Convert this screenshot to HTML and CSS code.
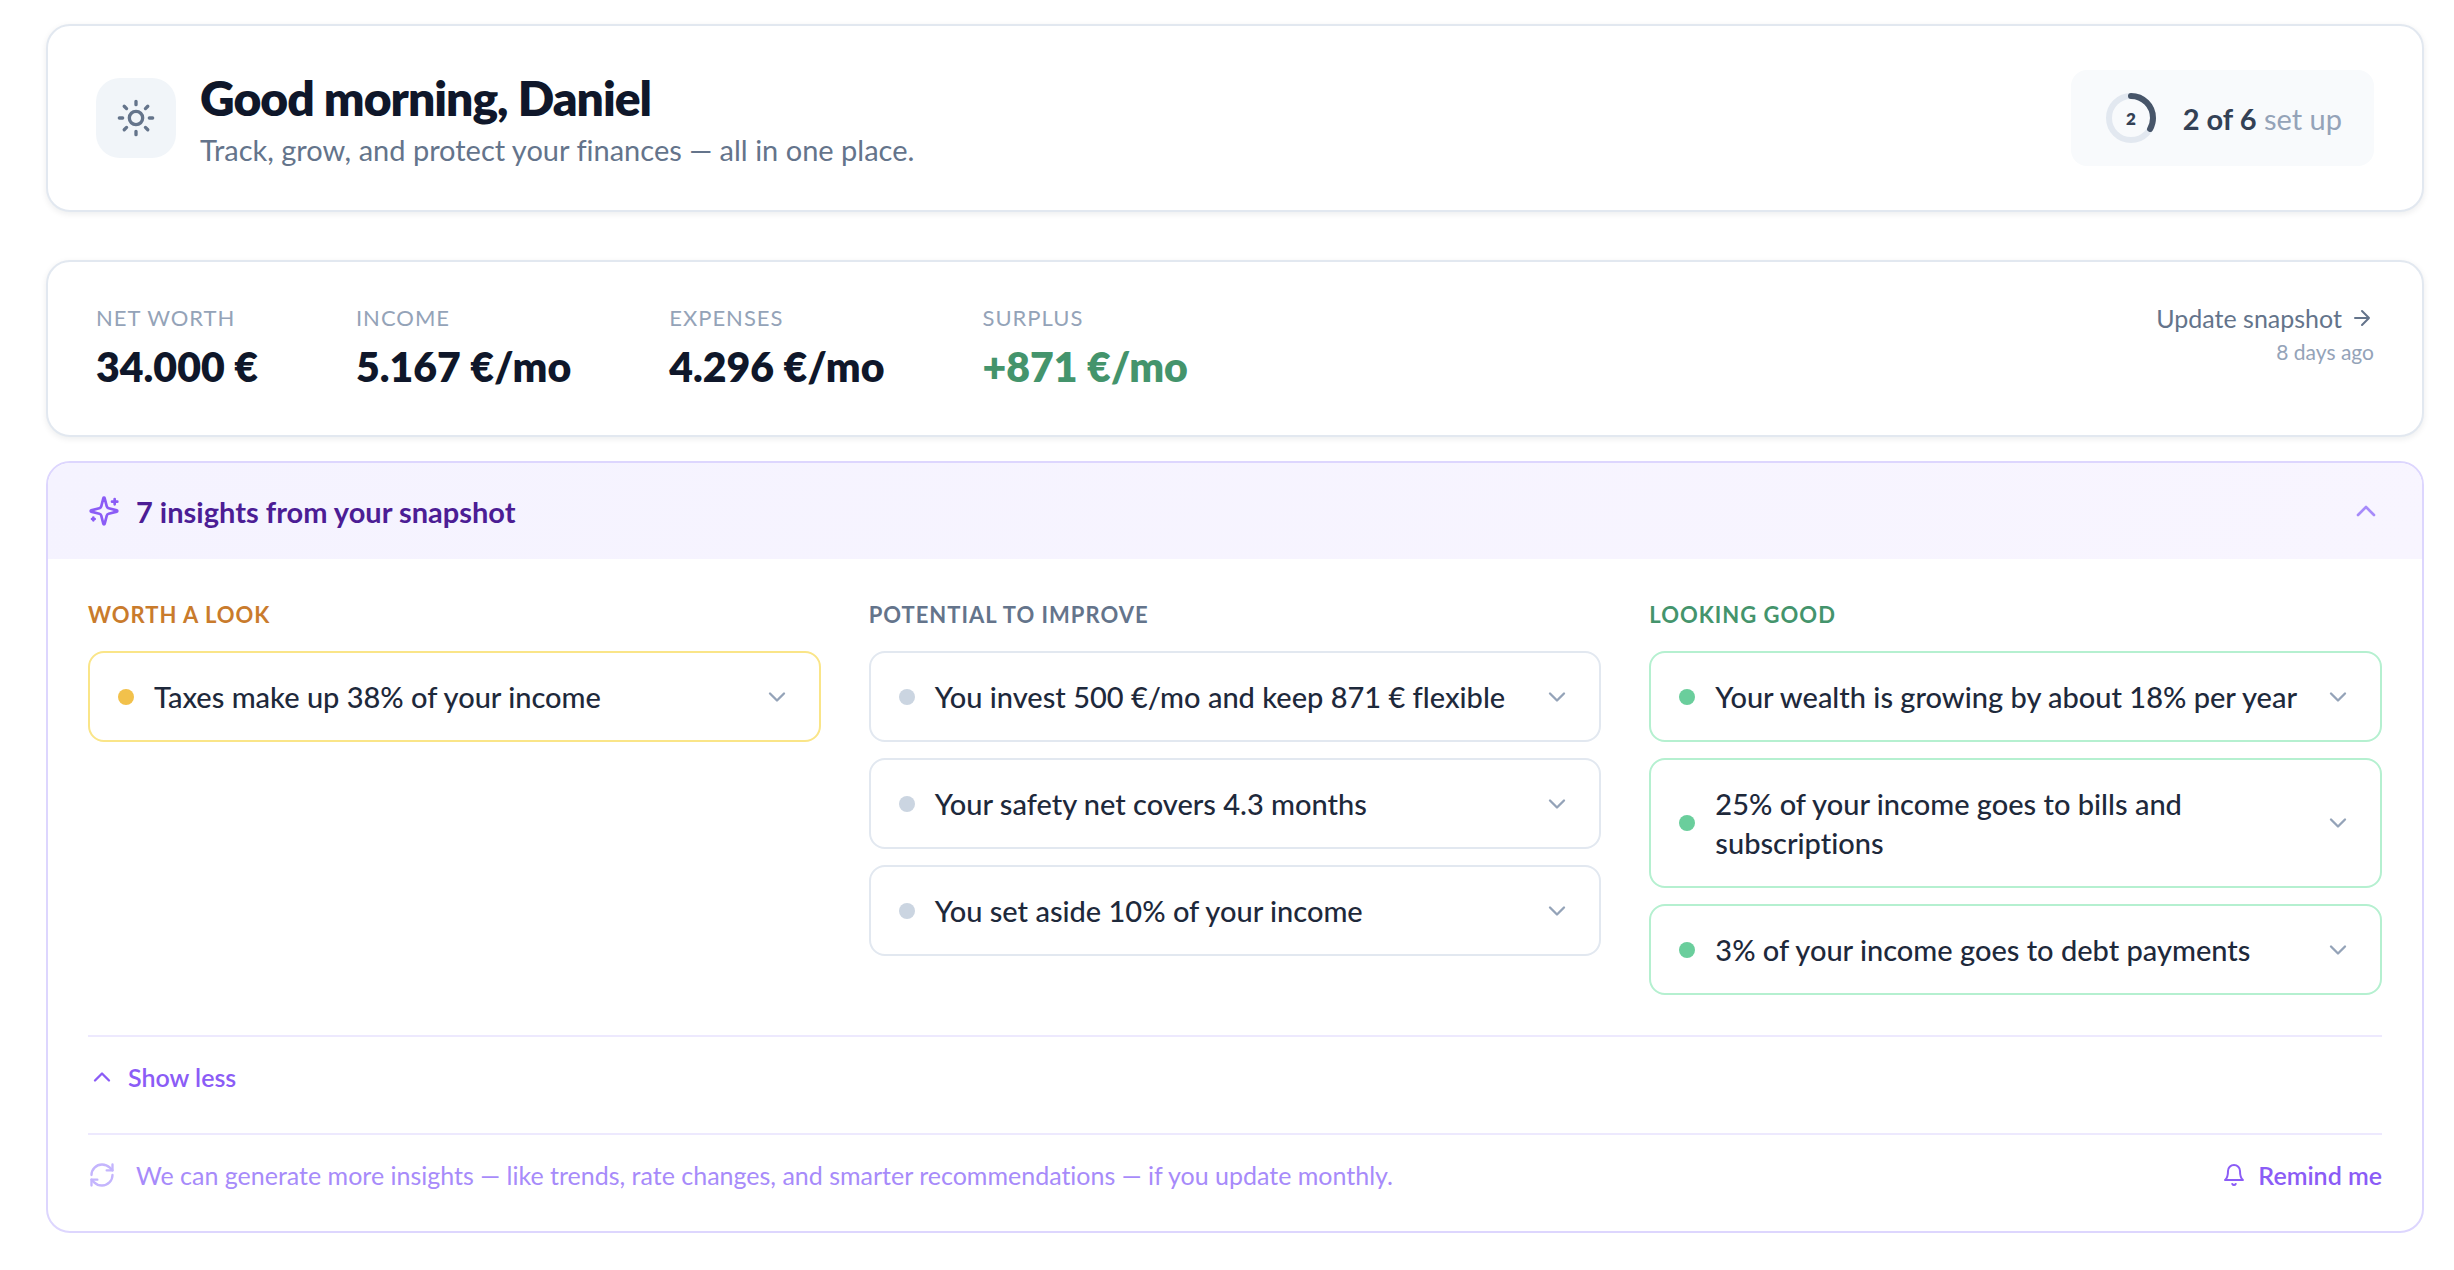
FILE: index.html
```html
<!DOCTYPE html>
<html lang="en">
<head>
  <meta charset="UTF-8">
  <meta name="viewport" content="width=device-width, initial-scale=1.0">
  <title>Financial overview</title>
  <link rel="stylesheet" href="styles.css">
</head>
<body>
  <!-- shared icons -->
  <svg class="sprite" aria-hidden="true">
    <symbol id="chevron-down" viewBox="0 0 24 24"><path d="m6 9 6 6 6-6"/></symbol>
    <symbol id="chevron-up" viewBox="0 0 24 24"><path d="m18 15-6-6-6 6"/></symbol>
  </svg>

  <main class="page">
    <header class="card greeting">
      <div class="greeting-icon">
        <svg class="icon icon-lg" viewBox="0 0 24 24"><circle cx="12" cy="12" r="4"/><path d="M12 2v2M12 20v2M4.93 4.93l1.41 1.41M17.66 17.66l1.41 1.41M2 12h2M20 12h2M6.34 17.66l-1.41 1.41M19.07 4.93l-1.41 1.41"/></svg>
      </div>
      <div class="greeting-text">
        <h1>Good morning, Daniel</h1>
        <p>Track, grow, and protect your finances — all in one place.</p>
      </div>
      <div class="setup">
        <svg class="ring" viewBox="0 0 56 56">
          <circle class="ring-track" cx="28" cy="28" r="22"/>
          <circle class="ring-value" cx="28" cy="28" r="22" pathLength="6" stroke-dasharray="2 4" transform="rotate(-90 28 28)"/>
          <text x="28" y="35" text-anchor="middle">2</text>
        </svg>
        <span><strong>2 of 6</strong> set up</span>
      </div>
    </header>

    <section class="card snapshot">
      <dl class="stats">
        <div><dt>Net worth</dt><dd>34.000 €</dd></div>
        <div><dt>Income</dt><dd>5.167 €/mo</dd></div>
        <div><dt>Expenses</dt><dd>4.296 €/mo</dd></div>
        <div><dt>Surplus</dt><dd class="positive">+871 €/mo</dd></div>
      </dl>
      <div class="update">
        <a href="#">Update snapshot <svg class="icon icon-sm" viewBox="0 0 24 24"><path d="M5 12h14M12 5l7 7-7 7"/></svg></a>
        <span>8 days ago</span>
      </div>
    </section>

    <section class="card insights">
      <button class="insights-head" type="button" aria-expanded="true">
        <svg class="icon icon-md sparkle" viewBox="0 0 24 24"><path d="M9.937 15.5A2 2 0 0 0 8.5 14.063l-6.135-1.582a.5.5 0 0 1 0-.962L8.5 9.936A2 2 0 0 0 9.937 8.5l1.582-6.135a.5.5 0 0 1 .963 0L14.063 8.5A2 2 0 0 0 15.5 9.937l6.135 1.581a.5.5 0 0 1 0 .964L15.5 14.063a2 2 0 0 0-1.437 1.437l-1.582 6.135a.5.5 0 0 1-.963 0z"/><path d="M20 3v4M22 5h-4M4 17v2M5 18H3"/></svg>
        <span>7 insights from your snapshot</span>
        <svg class="icon icon-md"><use href="#chevron-up"/></svg>
      </button>

      <div class="insights-body">
        <div class="columns">
          <div class="column warn">
            <h2>Worth a look</h2>
            <button class="insight" type="button"><i></i><span>Taxes make up 38% of your income</span><svg class="icon"><use href="#chevron-down"/></svg></button>
          </div>
          <div class="column neutral">
            <h2>Potential to improve</h2>
            <button class="insight" type="button"><i></i><span>You invest 500 €/mo and keep 871 € flexible</span><svg class="icon"><use href="#chevron-down"/></svg></button>
            <button class="insight" type="button"><i></i><span>Your safety net covers 4.3 months</span><svg class="icon"><use href="#chevron-down"/></svg></button>
            <button class="insight" type="button"><i></i><span>You set aside 10% of your income</span><svg class="icon"><use href="#chevron-down"/></svg></button>
          </div>
          <div class="column good">
            <h2>Looking good</h2>
            <button class="insight" type="button"><i></i><span>Your wealth is growing by about 18% per year</span><svg class="icon"><use href="#chevron-down"/></svg></button>
            <button class="insight" type="button"><i></i><span>25% of your income goes to bills and subscriptions</span><svg class="icon"><use href="#chevron-down"/></svg></button>
            <button class="insight" type="button"><i></i><span>3% of your income goes to debt payments</span><svg class="icon"><use href="#chevron-down"/></svg></button>
          </div>
        </div>

        <div class="less">
          <button class="link-button" type="button"><svg class="icon"><use href="#chevron-up"/></svg>Show less</button>
        </div>

        <div class="reminder">
          <svg class="icon" viewBox="0 0 24 24"><path d="M3 12a9 9 0 0 1 9-9 9.75 9.75 0 0 1 6.74 2.74L21 8"/><path d="M21 3v5h-5M21 12a9 9 0 0 1-9 9 9.75 9.75 0 0 1-6.74-2.74L3 16"/><path d="M8 16H3v5"/></svg>
          <p>We can generate more insights — like trends, rate changes, and smarter recommendations — if you update monthly.</p>
          <button class="link-button" type="button"><svg class="icon icon-sm" viewBox="0 0 24 24"><path d="M6 8a6 6 0 0 1 12 0c0 7 3 9 3 9H3s3-2 3-9"/><path d="M10.3 21a1.94 1.94 0 0 0 3.4 0"/></svg>Remind me</button>
        </div>
      </div>
    </section>
  </main>
</body>
</html>
```
FILE: styles.css
```css
* {
  box-sizing: border-box;
}
body {
  margin: 0;
  background: #fff;
  color: #0f172a;
  font-family: Lato, "Open Sans", sans-serif;
  font-size: 29px;
  font-variant-ligatures: none;
}
h1, h2, p, dl, dd {
  margin: 0;
}
button {
  border: none;
  background: none;
  padding: 0;
  font: inherit;
  color: inherit;
  text-align: left;
  cursor: pointer;
}
.sprite {
  display: none;
}
.page {
  padding: 24px 30px 36px 46px;
}
.card {
  background: #fff;
  border: 2px solid #e2e8f0;
  border-radius: 24px;
  box-shadow: 0 2px 6px rgba(15, 23, 42, 0.08);
}
.icon {
  flex: none;
  width: 28px;
  height: 28px;
  fill: none;
  stroke: currentColor;
  stroke-width: 2;
  stroke-linecap: round;
  stroke-linejoin: round;
}
.icon-sm { width: 24px; height: 24px; }
.icon-md { width: 32px; height: 32px; }
.icon-lg { width: 40px; height: 40px; }

/* greeting */
.greeting {
  display: flex;
  align-items: center;
  gap: 24px;
  padding: 40px 48px;
  margin-bottom: 48px;
}
.greeting-icon {
  display: flex;
  align-items: center;
  justify-content: center;
  width: 80px;
  height: 80px;
  border-radius: 24px;
  background: #f1f5f9;
  color: #64748b;
}
.greeting-text {
  flex: 1;
}
h1 {
  font-size: 48px;
  line-height: 64px;
  font-weight: 800;
  letter-spacing: -1px;
}
.greeting-text p {
  line-height: 40px;
  color: #64748b;
}
.setup {
  display: flex;
  align-items: center;
  gap: 24px;
  height: 96px;
  padding: 0 32px;
  border-radius: 16px;
  background: #f8fafc;
  color: #94a3b8;
}
.setup strong {
  font-weight: 700;
  color: #334155;
}
.ring {
  width: 56px;
  height: 56px;
}
.ring circle {
  fill: none;
  stroke-width: 6;
}
.ring-track { stroke: #e2e8f0; }
.ring-value { stroke: #475569; stroke-linecap: round; }
.ring text {
  font-size: 17px;
  font-weight: 800;
  fill: #334155;
}

/* snapshot */
.snapshot {
  display: flex;
  justify-content: space-between;
  padding: 40px 48px;
  margin-bottom: 24px;
}
.stats {
  display: flex;
  gap: 98px;
}
.stats dt {
  margin-bottom: 5px;
  font-size: 22px;
  line-height: 32px;
  letter-spacing: 1px;
  text-transform: uppercase;
  color: #94a3b8;
}
.stats dd {
  font-size: 41px;
  line-height: 56px;
  font-weight: 800;
}
.stats .positive {
  color: #44946c;
}
.update {
  display: flex;
  flex-direction: column;
  align-items: flex-end;
  gap: 2px;
  font-size: 21px;
  line-height: 32px;
  color: #94a3b8;
}
.update a {
  display: flex;
  align-items: center;
  gap: 8px;
  font-size: 25px;
  color: #64748b;
  text-decoration: none;
}

/* insights */
.insights {
  overflow: hidden;
  border-color: #ddd6fe;
  box-shadow: none;
}
.insights-head {
  display: flex;
  align-items: center;
  gap: 16px;
  width: 100%;
  height: 96px;
  padding: 0 40px;
  background: linear-gradient(135deg, #f5f3ff, #f8f5ff);
  color: #a78bfa;
}
.insights-head span {
  flex: 1;
  font-weight: 700;
  color: #4c1d95;
}
.sparkle {
  color: #8b5cf6;
}
.insights-body {
  padding: 40px;
}
.columns {
  display: grid;
  grid-template-columns: repeat(3, 1fr);
  gap: 48px;
  padding-bottom: 40px;
}
.column {
  display: flex;
  flex-direction: column;
  gap: 16px;
}
h2 {
  margin-bottom: 4px;
  font-size: 22px;
  line-height: 32px;
  font-weight: 700;
  letter-spacing: 1px;
  text-transform: uppercase;
}
.insight {
  display: flex;
  align-items: center;
  gap: 20px;
  padding: 24px 28px;
  border: 2px solid #e2e8f0;
  border-radius: 16px;
  line-height: 39px;
  font-weight: 500;
  color: #94a3b8;
}
.insight i {
  flex: none;
  width: 16px;
  height: 16px;
  border-radius: 50%;
  background: #cbd5e1;
}
.insight span {
  flex: 1;
  color: #1e293b;
}
.warn h2 { color: #c97b2c; }
.warn .insight { border-color: #fae588; }
.warn i { background: #f2c14b; }
.neutral h2 { color: #64748b; }
.good h2 { color: #44946c; }
.good .insight { border-color: #b5f0d0; }
.good i { background: #6ace9c; }

.link-button {
  display: flex;
  align-items: center;
  gap: 12px;
  font-size: 25px;
  line-height: 32px;
  font-weight: 600;
  color: #8b5cf6;
}
.less {
  padding: 24px 0 40px;
  border-top: 2px solid #ede9fe;
}
.reminder {
  display: flex;
  align-items: center;
  gap: 20px;
  padding-top: 24px;
  border-top: 2px solid #ede9fe;
  color: #c4b5fd;
}
.reminder p {
  flex: 1;
  font-size: 25px;
  line-height: 32px;
  color: #a78bfa;
}
```
